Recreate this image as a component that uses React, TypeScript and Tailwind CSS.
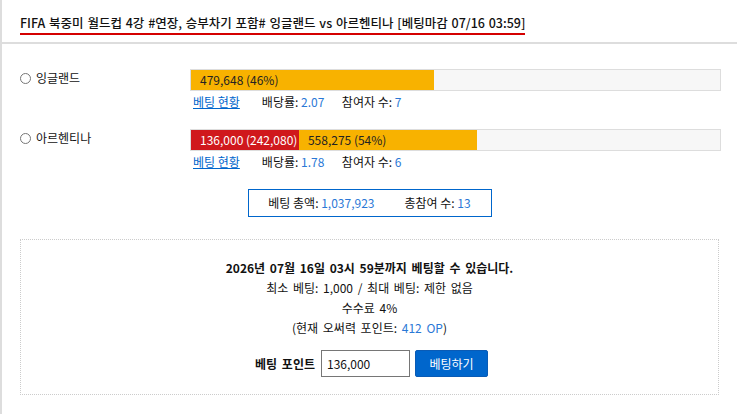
import React, { useState } from 'react';

interface Team {
  id: string;
  name: string;
  segments: { label: string; width: number; tone: 'mine' | 'pool' }[];
  odds: string;
  players: number;
}

const teams: Team[] = [
  {
    id: 'eng',
    name: '잉글랜드',
    segments: [{ label: '479,648 (46%)', width: 46, tone: 'pool' }],
    odds: '2.07',
    players: 7,
  },
  {
    id: 'arg',
    name: '아르헨티나',
    segments: [
      { label: '136,000 (242,080)', width: 20.4, tone: 'mine' },
      { label: '558,275 (54%)', width: 33.6, tone: 'pool' },
    ],
    odds: '1.78',
    players: 6,
  },
];

const App: React.FC = () => {
  const [picked, setPicked] = useState<string>('');
  const [amount, setAmount] = useState<string>('136,000');

  return (
    <div
      className="min-h-[414px] bg-white border-l-2 border-[#dddddd] text-[12px] text-[#111]"
      style={{ fontFamily: '"Noto Sans CJK KR", "Noto Sans", sans-serif' }}
    >
      {/* 제목 */}
      <div className="h-[44px] border-b-2 border-[#dddddd] px-[18px] flex items-start pt-[14px]">
        <h1 className="text-[12.5px] font-medium leading-[18px] pb-[1px] border-b-2 border-[#d40000] [word-spacing:1px]">
          FIFA 북중미 월드컵 4강 #연장, 승부차기 포함# 잉글랜드 vs 아르헨티나 [베팅마감 07/16 03:59]
        </h1>
      </div>

      {/* 선택지 */}
      <div className="pl-[18px] pr-[16px] pt-[25px] flex flex-col gap-[17px]">
        {teams.map((t) => (
          <div key={t.id} className="flex">
            <label className="w-[170px] flex items-start gap-[5px] cursor-pointer pt-[1px]">
              <input
                type="radio"
                name="team"
                checked={picked === t.id}
                onChange={() => setPicked(t.id)}
                className="w-[11px] h-[11px] mt-[3px] accent-[#0066cc]"
              />
              <span className="leading-[16px]">{t.name}</span>
            </label>
            <div className="flex-1">
              <div className="h-[22px] bg-[#f7f7f7] border border-[#dddddd] flex">
                {t.segments.map((s, i) => (
                  <div
                    key={i}
                    className={
                      s.tone === 'mine'
                        ? 'h-full bg-[#d0181c] text-white pl-[9px] leading-[20px] whitespace-nowrap'
                        : 'h-full bg-[#f8b200] text-[#222] pl-[9px] leading-[20px] whitespace-nowrap'
                    }
                    style={{ width: `${s.width}%` }}
                  >
                    {s.label}
                  </div>
                ))}
              </div>
              <div className="flex items-center h-[20px] mt-[1px] pl-[3px] leading-[20px]">
                <a href="#" className="text-[#0066cc] underline mr-[22px]">
                  베팅 현황
                </a>
                <span className="w-[80px]">
                  배당률: <span className="text-[#2a78d6]">{t.odds}</span>
                </span>
                <span>
                  참여자 수: <span className="text-[#2a78d6]">{t.players}</span>
                </span>
              </div>
            </div>
          </div>
        ))}
      </div>

      {/* 합계 */}
      <div className="flex justify-center mt-[17px]">
        <div className="w-[244px] h-[28px] border border-[#0066cc] flex items-center justify-center gap-[30px]">
          <span>
            베팅 총액: <span className="text-[#2a78d6]">1,037,923</span>
          </span>
          <span>
            총참여 수: <span className="text-[#2a78d6]">13</span>
          </span>
        </div>
      </div>

      {/* 베팅 폼 */}
      <div className="mx-[18px] mt-[22px] border border-dotted border-[#cccccc] pt-[18px] pb-[17px] flex flex-col items-center leading-[20px] [word-spacing:2px]">
        <p className="font-bold">2026년 07월 16일 03시 59분까지 베팅할 수 있습니다.</p>
        <p>최소 베팅: 1,000 / 최대 베팅: 제한 없음</p>
        <p>수수료 4%</p>
        <p>
          (현재 오써력 포인트: <span className="text-[#2a78d6]">412 OP</span>)
        </p>
        <div className="flex items-center gap-[5px] mt-[12px] ml-[4px] [word-spacing:0px]">
          <span className="font-bold mr-[1px] [word-spacing:2px]">베팅 포인트</span>
          <input
            type="text"
            value={amount}
            onChange={(e) => setAmount(e.target.value)}
            className="w-[89px] h-[27px] border border-[#767676] px-[5px] text-[12px] outline-none"
          />
          <button className="w-[73px] h-[27px] bg-[#0066cc] border border-[#0a5bb5] rounded-[2px] text-white text-[12px]">
            베팅하기
          </button>
        </div>
      </div>
    </div>
  );
};

export default App;
